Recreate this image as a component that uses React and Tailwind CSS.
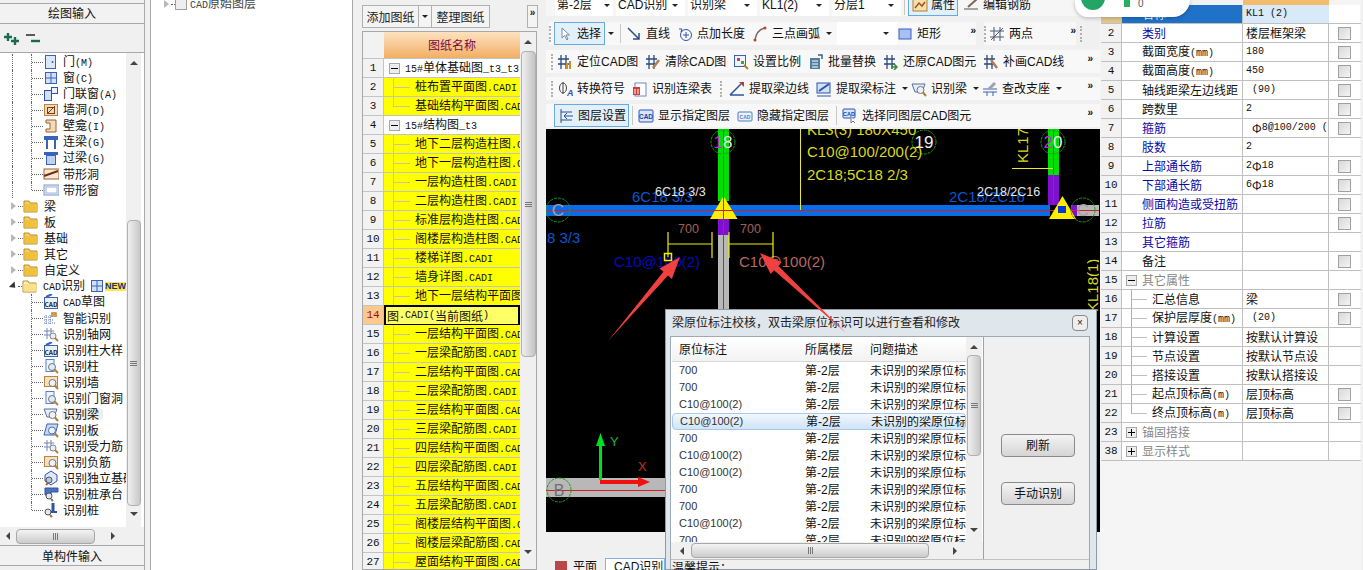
import React from "react";

// latin runs in the old grids are a narrow bitmap font, 6px per char
const T = ({ children }) =>
  String(children)
    .split(/([\x00-\x7f]+)/)
    .map((s, i) =>
      /[\x00-\x7f]/.test(s) ? (
        <span key={i} className="whitespace-pre font-['Liberation_Mono',monospace] text-[10px]">
          {s}
        </span>
      ) : (
        s
      )
    );

const Svg = ({ children, w = 16, h = 16, className = "" }) => (
  <svg width={w} height={h} viewBox="0 0 16 16" className={`shrink-0 ${className}`}>
    {children}
  </svg>
);

const ICONS = {
  door: <><rect x="2.5" y="1.5" width="10" height="13" fill="#dce8f8" stroke="#3a62b8" /><circle cx="9.5" cy="8" r="1" fill="#3a62b8" /></>,
  win: <><rect x="2.5" y="2.5" width="11" height="11" fill="#cfe0f8" stroke="#3a62b8" /><path d="M8 3v10M3 8h10" stroke="#3a62b8" /></>,
  doorwin: <><rect x="1.5" y="4.5" width="7" height="10" fill="#cfe0f8" stroke="#2f52a8" /><rect x="8.5" y="1.5" width="6" height="6" fill="#e8f0fc" stroke="#2f52a8" /></>,
  hole: <><rect x="1.5" y="2.5" width="13" height="11" fill="#f3d9b8" stroke="#c08040" /><path d="M4 12L12 4" stroke="#704020" /><rect x="4.5" y="5.5" width="7" height="6" fill="none" stroke="#704020" /></>,
  niche: <><path d="M3 2h10v12H3v-3h4V5H3z" fill="#f3d9b8" stroke="#a06030" /></>,
  lintel: <><rect x="1" y="2" width="14" height="4" fill="#3a62b8" /><path d="M4 6v9M12 6v9" stroke="#3a62b8" strokeWidth="2" /></>,
  guo: <><rect x="1" y="2" width="14" height="3" fill="#3a62b8" /><rect x="3.5" y="5.5" width="9" height="9" fill="#bcd2f0" stroke="#3a62b8" /></>,
  band: <><rect x="1" y="3" width="15" height="10" fill="#f8e8d8" stroke="#a06030" /><path d="M1 10L15 5" stroke="#703010" strokeWidth="2" /></>,
  bandw: <><rect x="1" y="3" width="15" height="10" fill="#e8eef8" stroke="#8098c8" /><rect x="3" y="5" width="11" height="6" fill="#fff" stroke="#a0b4d8" /></>,
  cad: <><rect x="1.5" y="3.5" width="13" height="11" fill="#e8f0fc" stroke="#3a62b8" /><path d="M3 3l6-3" stroke="#3a62b8" strokeWidth="2" /><text x="8" y="13" textAnchor="middle" fontSize="6.5" fontWeight="700" fill="#222">CAD</text></>,
  smart: <><path d="M1 7h7M1 10h10M1 13h12M3 5v9M7 5v9" stroke="#5878c8" strokeDasharray="1 1" /><path d="M9 7V3h4v4M11 7V4" stroke="#c08020" fill="none" strokeWidth="1.5" /></>,
  axis: <><path d="M1 5h10M1 9h10M4 2v11M8 2v11" stroke="#7088b8" /><circle cx="10" cy="10" r="3" fill="#e8eef8" stroke="#888" /><path d="M12 12l3 3" stroke="#b08030" strokeWidth="2" /></>,
  col: <><rect x="3" y="1.5" width="8" height="12" fill="#eef4fc" stroke="#6080b8" /><circle cx="9" cy="9" r="3.5" fill="#dfeaf8" stroke="#777" /><path d="M11.5 11.5l3.5 3.5" stroke="#b08030" strokeWidth="2" /></>,
  wall: <><rect x="1.5" y="2.5" width="13" height="10" fill="#f6dfc4" stroke="#c08040" /><circle cx="9.5" cy="9" r="3.5" fill="#eef2f8" stroke="#777" /><path d="M12 11.5l3 3.5" stroke="#b08030" strokeWidth="2" /></>,
  beam: <><path d="M1 3h13l-3 8H4z" fill="#e8eef8" stroke="#5070a8" /><circle cx="9.5" cy="9" r="3.5" fill="#eef2f8" stroke="#777" /><path d="M12 11.5l3 3.5" stroke="#b08030" strokeWidth="2" /></>,
  slab: <><path d="M4 2h11l-3 11H1z" fill="#c8d8f0" stroke="#3a62b8" /><circle cx="9" cy="8.5" r="3.5" fill="#eef2f8" stroke="#5070a8" /><path d="M12 11.5l3 3.5" stroke="#b08030" strokeWidth="2" /></>,
  found: <><path d="M8 1l6 4v6l-6 4-6-4V5z" fill="#dfe8f8" stroke="#2f52a8" /><circle cx="6" cy="10" r="3" fill="#b8c8e0" stroke="#555" /><path d="M5 13l-2 2" stroke="#a07030" strokeWidth="2" /></>,
  cap: <><path d="M2 2h13v4H8v3H2z" fill="#4a70c0" stroke="#2f52a8" /><circle cx="6" cy="10" r="3" fill="#dfe8f8" stroke="#555" /><path d="M8 13l2 2" stroke="#a07030" strokeWidth="2" /></>,
  pile: <><path d="M10 1v10" stroke="#2f52a8" strokeWidth="3" /><path d="M6 10h8" stroke="#2f52a8" strokeWidth="2" /><circle cx="5" cy="10" r="3" fill="#dfe8f8" stroke="#555" /><path d="M7 13l2 2" stroke="#a07030" strokeWidth="2" /></>,
  arrow: <path d="M5 2v10l2.5-2.5L10 14l1-1-2-4h3.5z" fill="#fff" stroke="#7a8aa0" />,
  line: <path d="M2 2l11 11M13 7v6H7" fill="none" stroke="#2f4f80" strokeWidth="1.5" />,
  len: <><circle cx="9" cy="9" r="5.5" fill="none" stroke="#2f52a8" /><path d="M9 6v6M6 9h6" stroke="#2f52a8" /><path d="M2 3l3 0-1 3" fill="none" stroke="#2f52a8" /></>,
  arc: <><path d="M3 14C4 7 8 3 13 2" fill="none" stroke="#806060" strokeWidth="1.5" /><circle cx="3" cy="14" r="1.5" fill="#c04040" /><circle cx="13" cy="2" r="1.5" fill="#c04040" /></>,
  rect: <rect x="2" y="3" width="12" height="10" fill="#a8c0f0" stroke="#3a5cc0" />,
  two: <path d="M5 1v14M11 1v14M1 5h14M1 11h14M2 14L14 2" stroke="#4a5a70" fill="none" />,
  locate: <><path d="M4 1v14M9 1v14M1 5h11M1 10h11" stroke="#2a4a80" strokeWidth="1.3" /><rect x="9" y="9" width="2" height="6" fill="#d09020" /><rect x="12" y="7" width="2" height="8" fill="#d09020" /></>,
  clear: <><path d="M4 1v14M9 1v14M1 5h11M1 10h11" stroke="#2a4a80" strokeWidth="1.3" /><path d="M14 6l-6 8" stroke="#b08050" strokeWidth="2.5" /></>,
  scale: <><rect x="1.5" y="1.5" width="11" height="11" fill="#eef4fc" stroke="#3a62b8" /><rect x="4" y="4" width="3" height="3" fill="#d04040" /><rect x="8" y="7" width="3" height="3" fill="#40a040" /><path d="M11 11l4 4" stroke="#b08030" strokeWidth="2" /></>,
  batch: <><rect x="2" y="4" width="10" height="11" fill="#5080a0" /><path d="M4 7h6M4 10h6M4 13h6" stroke="#fff" /><path d="M10 1h4v4" fill="none" stroke="#406080" strokeWidth="1.5" /></>,
  restore: <><path d="M4 1v14M9 1v14M1 5h11M1 10h11" stroke="#2a4a80" strokeWidth="1.3" /><path d="M8 13h6M11 10l3 3-3 3" fill="none" stroke="#309030" strokeWidth="1.5" /></>,
  patch: <><path d="M4 1v14M9 1v14M1 5h11M1 10h11" stroke="#2a4a80" strokeWidth="1.3" /><path d="M8 6l6 8" stroke="#b08050" strokeWidth="2.5" /></>,
  phi: <><ellipse cx="6" cy="7" rx="3.5" ry="5" fill="none" stroke="#444" /><path d="M6 1v12" stroke="#444" /><text x="10" y="15" fontSize="9" fontStyle="italic" fontWeight="700" fill="#2f52a8">A</text></>,
  table: <><rect x="3" y="2" width="11" height="13" fill="#fff" stroke="#7088b8" /><path d="M1 6h7v8H1z" fill="#d04030" /><path d="M3 8v5M6 8v5" stroke="#fff" /></>,
  edge: <><path d="M1 14L12 3M1 14h14" stroke="#2f52a8" strokeWidth="1.5" fill="none" /><path d="M10 1h5v5z" fill="#b04030" /></>,
  mark: <><rect x="1" y="2" width="13" height="10" fill="#cfe0f8" stroke="#2f52a8" /><path d="M3 10L13 3" stroke="#2f52a8" strokeWidth="2" /><path d="M1 15h14" stroke="#2f52a8" /></>,
  support: <><path d="M1 8h14M1 11h14M5 11v4M11 11v4" stroke="#3a62b8" /><path d="M7 8l6-6" stroke="#a0a0b0" strokeWidth="3" /></>,
  layer: <path d="M3 1v14M3 4h11M6 8h9M3 12h11M6 8l3-3M6 8l3 3" stroke="#2f4f80" fill="none" />,
  show: <><rect x="1" y="2" width="14" height="12" rx="1" fill="#d8e6fa" stroke="#2f52c0" /><text x="8" y="11" textAnchor="middle" fontSize="6.5" fontWeight="700" fill="#2040a0">CAD</text></>,
  hide: <><rect x="1" y="4" width="14" height="9" rx="1" fill="#eaf2fc" stroke="#5078c8" /><text x="8" y="10.5" textAnchor="middle" fontSize="5" fontWeight="700" fill="#6080c0">CAD</text></>,
  same: <><rect x="1" y="1" width="12" height="9" rx="1" fill="#d8e6fa" stroke="#2f52c0" /><text x="7" y="8" textAnchor="middle" fontSize="5.5" fontWeight="700" fill="#2040a0">CAD</text><path d="M9 8v7l2-2 2 2" fill="#fff" stroke="#777" /></>,
  attr: <><rect x="1" y="2" width="14" height="12" fill="#f6e0a8" stroke="#b08030" /><path d="M3 11l4-5 3 3 3-4" stroke="#a05020" fill="none" strokeWidth="1.5" /></>,
  rebar: <><path d="M1 12h14" stroke="#555" /><path d="M5 10l9-8" stroke="#7a6a50" strokeWidth="2" /></>,
};

const Ic = ({ k }) => <Svg>{ICONS[k]}</Svg>;

const Caret = ({ className = "" }) => (
  <span className={`block h-0 w-0 shrink-0 border-x-[3px] border-t-[3px] border-x-transparent border-t-[#222] ${className}`} />
);

const More = () => <span className="ml-auto mb-[6px] font-['Liberation_Sans'] text-[10px] font-bold leading-none">»</span>;
const Grip = ({ className = "" }) => <span className={`h-[16px] w-0 shrink-0 border-l-2 border-dotted border-[#b0b0b0] ${className}`} />;
const Sep = ({ className = "" }) => <span className={`h-[19px] w-px shrink-0 bg-[#c8c8c8] ${className}`} />;

const Tool = ({ k, label, className = "", caret }) => (
  <div className={`flex shrink-0 items-center gap-1 whitespace-nowrap ${className}`}>
    <Ic k={k} />
    <span>{label}</span>
    {caret && <Caret className="ml-[2px]" />}
  </div>
);

const Combo = ({ label, first }) => (
  <div
    className={`mr-[3px] flex h-[22px] items-center justify-between whitespace-nowrap bg-white pl-[2px] ${
      first ? "w-[58px] pr-[3px]" : "w-[69px] pr-[7px]"
    }`}
  >
    <span>{label}</span>
    <Caret />
  </div>
);

/* ---------- left tree ---------- */

const treeTop = [
  ["door", "门(M)"], ["win", "窗(C)"], ["doorwin", "门联窗(A)"], ["hole", "墙洞(D)"], ["niche", "壁龛(I)"],
  ["lintel", "连梁(G)"], ["guo", "过梁(G)"], ["band", "带形洞"], ["bandw", "带形窗"],
];
const treeCad = [
  ["cad", "CAD草图"], ["smart", "智能识别"], ["axis", "识别轴网"], ["cad", "识别柱大样"], ["col", "识别柱"],
  ["wall", "识别墙"], ["col", "识别门窗洞"], ["beam", "识别梁"], ["slab", "识别板"], ["axis", "识别受力筋"],
  ["wall", "识别负筋"], ["found", "识别独立基础"], ["cap", "识别桩承台"], ["pile", "识别桩"],
];

const Leaf = ({ k, label, guide, last, active }) => (
  <div className="relative flex h-4 items-center whitespace-nowrap">
    {guide && <span className="absolute left-[12px] top-0 h-4 border-l border-dotted border-[#666]" />}
    <span className={`absolute left-[31px] top-0 border-l border-dotted border-[#666] ${last ? "h-2" : "h-4"}`} />
    <span className="ml-[32px] w-[11px] shrink-0 border-t border-dotted border-[#666]" />
    <Ic k={k} />
    <span className={`ml-[3px] shrink-0 pl-[1px] pr-[4px] ${active ? "rounded-sm bg-[#eeeeee]" : ""}`}>
      <T>{label}</T>
    </span>
  </div>
);

const Folder = ({ open }) => (
  <svg width="16" height="14" viewBox="0 0 16 14" className="shrink-0">
    <path d="M1 2h5l1 2h7v9H1z" fill={open ? "#fff0b8" : "#f4cf5c"} stroke="#b89030" />
    <rect x="1.5" y="5" width="13" height="7.5" fill={open ? "#fbe08c" : "#f0c040"} />
  </svg>
);

const Branch = ({ label, open, children }) => (
  <div className="flex h-4 items-center whitespace-nowrap">
    <span
      className={`ml-[11px] h-0 w-0 border-y-[4px] border-l-[5px] border-y-transparent ${
        open ? "border-l-[#333] rotate-45" : "border-l-[#b8b8b8]"
      }`}
    />
    <span className="ml-[2px] w-[5px] border-t border-dotted border-[#666]" />
    <Folder open={open} />
    <span className="ml-[5px]">
      <T>{label}</T>
    </span>
    {children}
  </div>
);

const ScrollArrow = ({ dir }) => {
  const cls = {
    up: "border-x-[4px] border-b-[4px] border-x-transparent border-b-[#444]",
    down: "border-x-[4px] border-t-[4px] border-x-transparent border-t-[#444]",
    left: "border-y-[4px] border-r-[4px] border-y-transparent border-r-[#444]",
    right: "border-y-[4px] border-l-[4px] border-y-transparent border-l-[#444]",
  }[dir];
  return <span className={`block h-0 w-0 shrink-0 ${cls}`} />;
};

const HGrip = () => (
  <span className="flex flex-col gap-px">
    <span className="h-px w-[7px] bg-[#777]" />
    <span className="h-px w-[7px] bg-[#777]" />
    <span className="h-px w-[7px] bg-[#777]" />
  </span>
);
const VGrip = () => (
  <span className="flex gap-px">
    <span className="h-[7px] w-px bg-[#777]" />
    <span className="h-[7px] w-px bg-[#777]" />
    <span className="h-[7px] w-px bg-[#777]" />
  </span>
);

const LeftPanel = () => (
  <div className="flex h-full w-[145px] shrink-0 flex-col border-r border-[#a8a8a8] bg-[#f0f0f0]">
    <div className="mt-[3px] flex h-[21px] items-center justify-center border-y border-[#a8a8a8] bg-[#f2f2f2] pb-[1px]">绘图输入</div>
    <div className="flex h-[28px] items-center gap-[5px] pl-[3px] pt-[2px]">
      <svg width="17" height="14" viewBox="0 0 17 14">
        <path d="M5 1v8M1 5h8M12 5v8M8 9h8" stroke="#1a6a50" strokeWidth="2.4" />
      </svg>
      <svg width="16" height="14" viewBox="0 0 16 14">
        <path d="M1 3h9" stroke="#333" strokeWidth="1.6" />
        <path d="M6 9h9" stroke="#1a6a50" strokeWidth="2.4" />
      </svg>
    </div>
    <div className="flex h-[475px] border-t border-[#a8a8a8] bg-white">
      <div className="min-w-0 flex-1 overflow-hidden pt-[1px]">
        {treeTop.map(([k, l], i) => (
          <Leaf key={l} k={k} label={l} guide last={i === treeTop.length - 1} />
        ))}
        <Branch label="梁" />
        <Branch label="板" />
        <Branch label="基础" />
        <Branch label="其它" />
        <Branch label="自定义" />
        <Branch label="CAD识别" open>
          <span className="ml-[4px] flex items-center">
            <Ic k="win" />
          </span>
          <span className="bg-[#ffe840] font-['Liberation_Sans'] text-[9px] font-bold leading-[9px] text-[#203080]">NEW</span>
        </Branch>
        {treeCad.map(([k, l], i) => (
          <Leaf key={l} k={k} label={l} last={i === treeCad.length - 1} active={l === "识别梁"} />
        ))}
      </div>
      <div className="flex w-[15px] shrink-0 flex-col items-center bg-[#f0f0f0] pt-[8px]">
        <ScrollArrow dir="up" />
        <div className="mb-[6px] mt-[155px] flex h-[286px] w-[14px] items-center justify-center rounded-sm border border-[#b0b0b0] bg-gradient-to-r from-[#f0f0f0] to-[#c8c8c8]">
          <HGrip />
        </div>
        <ScrollArrow dir="down" />
      </div>
      <div className="w-[3px] shrink-0 bg-white" />
    </div>
    <div className="flex h-[18px] items-center bg-[#f0f0f0] pl-[6px] pr-[27px]">
      <ScrollArrow dir="left" />
      <div className="ml-[6px] flex h-[15px] w-[79px] items-center justify-center rounded-sm border border-[#a8a8a8] bg-gradient-to-b from-[#f4f4f4] to-[#cccccc]">
        <VGrip />
      </div>
      <span className="ml-[16px]">
        <ScrollArrow dir="right" />
      </span>
    </div>
    <div className="flex h-[21px] items-center justify-center border-y border-[#a8a8a8] bg-[#f2f2f2]">单构件输入</div>
  </div>
);

const LayerPane = () => (
  <div className="ml-[5px] h-full w-[203px] shrink-0 border-x border-[#a8a8a8] bg-white">
    <div className="-mt-[4px] flex h-4 items-center pl-[13px]">
      <span className="h-0 w-0 border-y-[4px] border-l-[5px] border-y-transparent border-l-[#b8b8b8]" />
      <span className="ml-[2px] w-[4px] border-t border-dotted border-[#666]" />
      <span className="h-[12px] w-[12px] border border-[#a0a0a0] bg-[#eeeeee]" />
      <span className="ml-[3px] text-[#444]">
        <T>CAD原始图层</T>
      </span>
    </div>
  </div>
);

/* ---------- drawing list ---------- */

const sheets = [
  ["15#单体基础图_t3_t3", "g"], ["桩布置平面图.CADI"], ["基础结构平面图.CADI", "last"], ["15#结构图_t3", "g"],
  ["地下二层构造柱图.CADI"], ["地下一层构造柱图.CADI"], ["一层构造柱图.CADI"], ["二层构造柱图.CADI"],
  ["标准层构造柱图.CADI"], ["阁楼层构造柱图.CADI"], ["楼梯详图.CADI"], ["墙身详图.CADI"],
  ["地下一层结构平面图.CADI"], ["图.CADI(当前图纸)", "cur"], ["一层结构平面图.CADI"], ["一层梁配筋图.CADI"],
  ["二层结构平面图.CADI"], ["二层梁配筋图.CADI"], ["三层结构平面图.CADI"], ["三层梁配筋图.CADI"],
  ["四层结构平面图.CADI"], ["四层梁配筋图.CADI"], ["五层结构平面图.CADI"], ["五层梁配筋图.CADI"],
  ["阁楼层结构平面图.CADI"], ["阁楼层梁配筋图.CADI"], ["屋面结构平面图.CADI"],
];

const MinusBox = ({ plus }) => (
  <span className="relative flex h-[11px] w-[11px] shrink-0 items-center justify-center border border-[#a8a8a8] bg-[#eeeeee]">
    <span className="h-px w-[7px] bg-black" />
    {plus && <span className="absolute h-[7px] w-px bg-black" />}
  </span>
);

const SheetRow = ({ n, name, kind }) => (
  <div className="flex h-[19px] border-b border-[#c4c4c4]">
    <div
      className={`flex w-[21px] shrink-0 items-center justify-center border-r border-[#c4c4c4] font-['Liberation_Mono'] text-[11px] ${
        kind === "cur" ? "bg-[#fbc98e] text-[#9a1010]" : "bg-[#f2f2f2]"
      }`}
    >
      {n}
    </div>
    {kind === "g" ? (
      <div className="flex flex-1 items-center overflow-hidden whitespace-nowrap bg-white pl-[5px]">
        <MinusBox />
        <span className="ml-[5px]">
          <T>{name}</T>
        </span>
      </div>
    ) : kind === "cur" ? (
      <div className="-my-px flex h-[21px] flex-1 items-center overflow-hidden whitespace-nowrap border-2 border-black bg-[#ffff66] pl-[1px]">
        <T>{name}</T>
      </div>
    ) : (
      <div className="flex flex-1 items-center overflow-hidden whitespace-nowrap bg-[#ffff00] pl-[9px]">
        <span className={`w-px shrink-0 bg-[#c8c8a0] ${kind === "last" ? "h-[10px] self-start" : "h-full"}`} />
        <span className="w-[16px] shrink-0 border-t border-[#c8c8a0]" />
        <span className="ml-[5px]">
          <T>{name}</T>
        </span>
      </div>
    )}
  </div>
);

const SheetPane = () => (
  <div className="ml-[5px] flex h-full w-[187px] shrink-0 flex-col">
    <div className="mt-[5px] flex h-[23px] items-stretch pl-[4px] pr-[7px] text-[#222]">
      <div className="flex w-[57px] items-center justify-center border border-[#b0b0b0] bg-[#f4f4f4]">添加图纸</div>
      <div className="flex w-[13px] items-center justify-center border-y border-r border-[#b0b0b0] bg-[#f4f4f4]">
        <Caret />
      </div>
      <div className="flex w-[58px] items-center justify-center border-y border-r border-[#b0b0b0] bg-[#f4f4f4]">整理图纸</div>
      <div className="ml-auto flex w-[11px] justify-center border border-[#b0b0b0] bg-[#f4f4f4] pt-[2px]">
        <span className="font-['Liberation_Sans'] text-[10px] font-bold leading-none">»</span>
      </div>
    </div>
    <div className="ml-[4px] mt-[3px] flex min-h-0 w-[175px] flex-1 overflow-hidden border border-[#a8a8a8] bg-white">
      <div className="w-[157px] shrink-0">
        <div className="flex h-[27px] border-b border-[#c4c4c4]">
          <div className="w-[21px] shrink-0 bg-[#f2f2f2]" />
          <div className="flex flex-1 items-center justify-center bg-gradient-to-b from-[#fbe2c0] to-[#f3ae62] text-[#7a0a40]">图纸名称</div>
        </div>
        {sheets.map(([name, kind], i) => (
          <SheetRow key={i} n={i + 1} name={name} kind={kind} />
        ))}
      </div>
      <div className="flex w-[16px] shrink-0 flex-col items-center bg-[#f0f0f0] pt-[8px]">
        <ScrollArrow dir="up" />
        <div className="mt-[7px] flex h-[306px] w-[15px] items-center justify-center rounded-sm border border-[#b0b0b0] bg-gradient-to-r from-[#f0f0f0] to-[#c4c4c4]">
          <HGrip />
        </div>
        <div className="mt-[193px]">
          <ScrollArrow dir="down" />
        </div>
      </div>
    </div>
  </div>
);

/* ---------- CAD canvas ---------- */

const Axis = ({ x, y, children }) => (
  <>
    <circle cx={x} cy={y} r="12" fill="none" stroke="#1a9a1a" strokeDasharray="3 1" />
    {children}
  </>
);

const CadCanvas = () => (
  <div className="h-[403px] w-full shrink-0 bg-black">
    <svg width="553" height="403" viewBox="546 129 553 403" className="block font-['Liberation_Sans']">
      {/* beams */}
      <rect x="546" y="205" width="504" height="11" fill="#0a6be6" />
      <rect x="718" y="129" width="11" height="72" fill="#00e000" />
      <rect x="718" y="219" width="11" height="16" fill="#8010d0" />
      <rect x="718" y="235" width="11" height="80" fill="#b8b8b8" />
      <path d="M723.5 129V315" stroke="#d02020" />
      <rect x="1048" y="129" width="11" height="46" fill="#00e000" />
      <rect x="1048" y="175" width="11" height="30" fill="#8010d0" />
      <path d="M1053.5 129V205" stroke="#d02020" />
      <rect x="1074" y="205" width="25" height="11" fill="#b8b8b8" />
      <rect x="1071" y="205" width="6" height="11" fill="#8010d0" />
      <rect x="546" y="478" width="120" height="19" fill="#b8b8b8" />
      <path d="M546 210.5H1099M546 490.5H666" stroke="#d02020" />
      <path d="M800.5 129V210M1012 168.5H1053" stroke="#e8e830" />
      {/* supports */}
      <path d="M723.5 196L737.5 219H710z" fill="#ffee00" />
      <path d="M723.5 196V219M710 210.5H737" stroke="#d02020" />
      <path d="M1062.5 196L1076 219H1049z" fill="#ffee00" />
      <rect x="1058" y="206" width="8" height="7" fill="#0838d8" />
      {/* axis bubbles */}
      <Axis x={723} y={142}>
        <text x="723" y="148" textAnchor="middle" fontSize="17" fill="#e8e8e8"><tspan fill="#b040c0">1</tspan>8</text>
      </Axis>
      <Axis x={924} y={142}>
        <text x="924" y="148" textAnchor="middle" fontSize="17" fill="#f0f0f0">19</text>
      </Axis>
      <Axis x={1053} y={142}>
        <text x="1053" y="148" textAnchor="middle" fontSize="17" fill="#f0f0f0"><tspan fill="#b040c0">2</tspan>0</text>
      </Axis>
      <Axis x={558} y={210}>
        <text x="558" y="216" textAnchor="middle" fontSize="17" fill="#a0a0a0">C</text>
      </Axis>
      <Axis x={1083} y={210}>
        <text x="1083" y="216" textAnchor="middle" fontSize="17" fill="#a0a0a0">C</text>
      </Axis>
      <Axis x={559} y={490}>
        <text x="559" y="496" textAnchor="middle" fontSize="16" fill="#707070">B</text>
      </Axis>
      {/* annotation text */}
      <g fontSize="15" fill="#d8d820">
        <text x="807" y="135">KL3(3) 180X450</text>
        <text x="807" y="157">C10@100/200(2)</text>
        <text x="807" y="180">2C18;5C18 2/3</text>
      </g>
      <text transform="translate(1028 163) rotate(-90)" fontSize="15" fill="#d8d820">KL17</text>
      <text transform="translate(1098 312) rotate(-90)" fontSize="15" fill="#d8d820">KL18(1)</text>
      <text x="632" y="202" fontSize="15" fill="#0a55d0">6C18 3/3</text>
      <text x="655" y="196" fontSize="12.5" fill="#e8e8e8">6C18 3/3</text>
      <text x="949" y="202" fontSize="15" fill="#0a55d0">2C18/2C16</text>
      <text x="977" y="196" fontSize="12.5" fill="#e8e8e8">2C18/2C16</text>
      <text x="547" y="243" fontSize="15" fill="#0a55d0">8 3/3</text>
      <text x="678" y="233" fontSize="12.5" fill="#a06058">700</text>
      <text x="740" y="233" fontSize="12.5" fill="#a06058">700</text>
      <text x="614" y="267" fontSize="15" fill="#0808c0">C10@100(2)</text>
      <text x="739" y="267" fontSize="15" fill="#b86860">C10@100(2)</text>
      {/* dimension lines */}
      <path d="M668 244H712M668 232V257M712 232V258M729 244H773M729 232V258M773 232V258" stroke="#f0f000" strokeWidth="1.2" />
      <rect x="664.5" y="253.5" width="7" height="7" fill="none" stroke="#f0f000" strokeWidth="1.5" />
      {/* ucs */}
      <path d="M600.5 480V440" stroke="#00e020" strokeWidth="3" />
      <path d="M600.5 433L605 446H596z" fill="#00e020" />
      <text x="610" y="446" fontSize="13" fill="#20b040">Y</text>
      <path d="M600 482H640" stroke="#f01010" strokeWidth="4" />
      <path d="M650 482L638 477V487z" fill="#f01010" />
      <text x="638" y="471" fontSize="13" fill="#c03030">X</text>
    </svg>
  </div>
);

/* ---------- dialog ---------- */

const checks = ["700", "700", "C10@100(2)", "C10@100(2)", "700", "C10@100(2)", "C10@100(2)", "700", "700", "C10@100(2)", "700"];

const DialogRow = ({ label, selected }) => (
  <div
    className={`flex h-[17px] items-center whitespace-nowrap ${
      selected ? "rounded-sm border border-[#a8c8ea] bg-gradient-to-b from-[#f2f8fe] to-[#cfe3f8]" : ""
    }`}
  >
    <span className="w-[133px] shrink-0 pl-[7px] font-['Liberation_Sans'] text-[11px] text-[#333]">{label}</span>
    <span className="w-[65px] shrink-0 font-['Liberation_Sans','Noto_Sans_CJK_SC',sans-serif]">第-2层</span>
    <span className="overflow-hidden">未识别的梁原位标注</span>
  </div>
);

const DialogBtn = ({ children, className = "" }) => (
  <div className={`flex h-[23px] w-[74px] items-center justify-center rounded-sm border border-[#8a8a8a] bg-gradient-to-b from-[#f4f4f4] to-[#d4d4d4] ${className}`}>{children}</div>
);

const Dialog = () => (
  <div className="absolute left-[119px] top-[309px] flex h-[261px] w-[432px] flex-col border border-[#909aa4] bg-[#dfe6ec]">
    <div className="flex h-[26px] shrink-0 items-center justify-between pl-[6px] pr-[8px] text-[#222]">
      <span>梁原位标注校核，双击梁原位标识可以进行查看和修改</span>
      <span className="flex h-[16px] w-[16px] items-center justify-center rounded-sm border border-[#8a8a8a] bg-[#eeeeee] font-['Liberation_Sans'] text-[10px] leading-none">×</span>
    </div>
    <div className="ml-[4px] mr-[6px] flex min-h-0 flex-1 flex-col border-x border-t border-[#a0a8b0] bg-[#f0f0f0]">
      <div className="flex h-[222px] shrink-0">
        <div className="flex h-full w-[313px] shrink-0 flex-col border-r border-[#a0a0a0] bg-white">
          <div className="flex min-h-0 flex-1">
            <div className="flex w-[295px] shrink-0 flex-col overflow-hidden pl-[1px]">
              <div className="mt-[2px] flex h-[23px] shrink-0 items-center border-b border-[#d8d8d8] bg-gradient-to-b from-white to-[#f2f2f2]">
                <span className="w-[133px] pl-[7px]">原位标注</span>
                <span className="w-[65px]">所属楼层</span>
                <span>问题描述</span>
              </div>
              <div className="min-h-0 flex-1 overflow-hidden">
                {checks.map((c, i) => (
                  <DialogRow key={i} label={c} selected={i === 3} />
                ))}
              </div>
            </div>
            <div className="flex w-[16px] shrink-0 flex-col items-center bg-[#f0f0f0] pt-[8px]">
              <ScrollArrow dir="up" />
              <div className="mt-[6px] flex h-[101px] w-[14px] items-center justify-center rounded-sm border border-[#b0b0b0] bg-gradient-to-r from-[#f0f0f0] to-[#c8c8c8]">
                <HGrip />
              </div>
              <div className="mt-[72px]">
                <ScrollArrow dir="down" />
              </div>
            </div>
          </div>
          <div className="flex h-[17px] shrink-0 items-center bg-[#f0f0f0] pl-[9px]">
            <ScrollArrow dir="left" />
            <div className="ml-[7px] flex h-[15px] w-[238px] items-center justify-center rounded-sm border border-[#a8a8a8] bg-gradient-to-b from-[#f4f4f4] to-[#cccccc]">
              <VGrip />
            </div>
            <span className="ml-[24px]">
              <ScrollArrow dir="right" />
            </span>
          </div>
        </div>
        <div className="flex flex-1 flex-col pl-[17px] pt-[97px]">
          <DialogBtn>刷新</DialogBtn>
          <DialogBtn className="mt-[25px]">手动识别</DialogBtn>
        </div>
      </div>
      <div className="border-t border-[#c0c0c0] pl-[1px] pt-[1px] leading-[14px]">温馨提示：</div>
    </div>
  </div>
);

/* ---------- middle column ---------- */

const MiddleColumn = () => (
  <div className="relative ml-[1px] flex h-full w-[554px] shrink-0 flex-col overflow-hidden bg-[#f0f0f0] font-['Liberation_Sans','Noto_Sans_CJK_SC',sans-serif]">
    <div className="-mt-[6px] flex h-[22px] items-center bg-[#f6f6f6] pl-[9px]">
      <Combo label="第-2层" first />
      <Combo label="CAD识别" />
      <Combo label="识别梁" />
      <Combo label="KL1(2)" />
      <Combo label="分层1" />
      <Sep />
      <div className="ml-[3px] flex h-[22px] w-[50px] items-center gap-[3px] whitespace-nowrap border border-[#6aa8e0] bg-[#e2f0fc] pl-[3px]">
        <Ic k="attr" />
        <span>属性</span>
      </div>
      <Tool k="rebar" label="编辑钢筋" className="ml-[5px]" />
    </div>

    <div className="mt-[6px] flex h-[23px] items-center">
      <div className="ml-[3px] flex h-full w-[427px] items-center bg-[#f8f8f8]">
        <Grip className="mr-[3px]" />
        <div className="flex h-[23px] w-[51px] items-center gap-[4px] border border-[#6aa8e0] bg-[#e2f0fc] pl-[2px]">
          <Ic k="arrow" />
          <span>选择</span>
        </div>
        <Caret className="ml-[3px]" />
        <Sep className="ml-[6px]" />
        <Tool k="line" label="直线" className="ml-[5px] w-[51px]" />
        <Tool k="len" label="点加长度" className="w-[75px]" />
        <Tool k="arc" label="三点画弧" caret className="w-[85px]" />
        <div className="flex h-full w-[60px] items-center justify-between bg-white pr-[8px]">
          <span />
          <Caret />
        </div>
        <Tool k="rect" label="矩形" className="w-[72px]" />
        <More />
      </div>
      <div className="ml-[8px] flex h-full w-[92px] items-center bg-[#f8f8f8]">
        <Grip className="mr-[3px]" />
        <Tool k="two" label="两点" />
        <More />
      </div>
      <Grip className="ml-[4px]" />
    </div>

    <div className="mt-[5px] flex h-[23px] items-center bg-[#f8f8f8] pl-[5px] pr-[7px]">
      <Grip className="mr-[4px]" />
      <Tool k="locate" label="定位CAD图" className="w-[88px]" />
      <Tool k="clear" label="清除CAD图" className="w-[88px]" />
      <Tool k="scale" label="设置比例" className="w-[75px]" />
      <Tool k="batch" label="批量替换" className="w-[75px]" />
      <Tool k="restore" label="还原CAD图元" className="w-[100px]" />
      <Tool k="patch" label="补画CAD线" />
      <More />
    </div>

    <div className="mt-[4px] flex h-[23px] items-center bg-[#f8f8f8] pl-[5px] pr-[7px]">
      <Grip className="mr-[4px]" />
      <Tool k="phi" label="转换符号" className="w-[75px]" />
      <Tool k="table" label="识别连梁表" className="w-[88px]" />
      <Grip className="mr-[7px]" />
      <Tool k="edge" label="提取梁边线" className="w-[87px]" />
      <Tool k="mark" label="提取梁标注" caret className="w-[95px]" />
      <Tool k="beam" label="识别梁" caret className="w-[71px]" />
      <Tool k="support" label="查改支座" caret />
      <More />
    </div>

    <div className="mt-[4px] flex h-[23px] items-center bg-[#f8f8f8] pl-[8px] pr-[7px]">
      <div className="flex h-[23px] w-[75px] items-center gap-[4px] whitespace-nowrap border border-[#6aa8e0] bg-[#e2f0fc] pl-[3px]">
        <Ic k="layer" />
        <span>图层设置</span>
      </div>
      <Sep className="ml-[3px]" />
      <Tool k="show" label="显示指定图层" className="ml-[5px] w-[99px]" />
      <Tool k="hide" label="隐藏指定图层" className="w-[99px]" />
      <Sep className="mr-[5px]" />
      <Tool k="same" label="选择同图层CAD图元" />
      <More />
    </div>

    <div className="mt-[2px]">
      <CadCanvas />
    </div>

    <div className="flex flex-1 items-end overflow-hidden pl-[9px]">
      <div className="-mb-[5px] flex h-[17px] items-center">
        <span className="h-[12px] w-[12px] bg-[#b84848]" />
        <span className="ml-[6px] w-[32px]">平面</span>
        <span className="flex h-[17px] w-[60px] items-center border border-[#8ab0e0] bg-white pl-[8px]">CAD识别</span>
      </div>
    </div>

    <Dialog />

    {/* the two red arrows were scribbled over the window, dialog included */}
    <svg width="554" height="441" viewBox="546 129 554 441" className="pointer-events-none absolute left-0 top-[129px]">
      <path d="M608 341L663.4 271.7L659.6 268.5L680 257L671.8 278.9L668 275.6Z" fill="#f04040" />
      <path d="M846 333L778.1 265.8L781.5 262.1L760 253L770.7 273.9L774 270.2Z" fill="#f04040" />
    </svg>
  </div>
);

/* ---------- properties ---------- */

const props = [
  [2, "类别", "楼层框架梁", 1, "b"], [3, "截面宽度(mm)", "180", 1], [4, "截面高度(mm)", "450", 1],
  [5, "轴线距梁左边线距", " (90)", 1], [6, "跨数里", "2", 1], [7, "箍筋", " Φ8@100/200 (2", 1, "b"], [8, "肢数", "2", 0, "b"],
  [9, "上部通长筋", "2Φ18", 1, "b"], [10, "下部通长筋", "6Φ18", 1, "b"], [11, "侧面构造或受扭筋", "", 1, "b"],
  [12, "拉筋", "", 1, "b"], [13, "其它箍筋", "", 0, "b"], [14, "备注", "", 1],
  [15, "其它属性", "", 0, "g"], [16, "汇总信息", "梁", 1, "c"], [17, "保护层厚度(mm)", " (20)", 1, "c"],
  [18, "计算设置", "按默认计算设", 0, "c"], [19, "节点设置", "按默认节点设", 0, "c"], [20, "搭接设置", "按默认搭接设", 0, "c"],
  [21, "起点顶标高(m)", "层顶标高", 1, "c"], [22, "终点顶标高(m)", "层顶标高", 1, "e"],
  [23, "锚固搭接", "", 0, "p"], [38, "显示样式", "", 0, "p"],
];

const PropRow = ({ n, name, value, check, kind }) => {
  const child = kind === "c" || kind === "e";
  const box = kind === "g" || kind === "p";
  return (
    <div className="flex h-[19px] border-b border-[#c0c0c0]">
      <div className="flex w-[21px] shrink-0 items-center justify-center border-r border-[#c0c0c0] bg-[#f2f2f2] font-['Liberation_Mono'] text-[11px]">{n}</div>
      <div
        className={`flex w-[121px] shrink-0 items-center overflow-hidden whitespace-nowrap border-r border-[#c0c0c0] bg-white ${
          box ? "pl-[4px] text-[#888]" : child ? "pl-[9px]" : "pl-[20px]"
        } ${kind === "b" ? "text-[#0a0aa8]" : ""}`}
      >
        {kind === "g" && <MinusBox />}
        {kind === "p" && <MinusBox plus />}
        {child && <span className={`w-px shrink-0 bg-[#b0b0b0] ${kind === "e" ? "h-[10px] self-start" : "h-full"}`} />}
        {child && <span className="mr-[5px] w-[15px] shrink-0 border-t border-[#c0c0c0]" />}
        <span className={box ? "ml-[5px]" : ""}>
          <T>{name}</T>
        </span>
      </div>
      <div className="flex w-[86px] shrink-0 items-center overflow-hidden whitespace-nowrap border-r border-[#c0c0c0] bg-white pl-[3px]">
        <T>{value}</T>
      </div>
      <div className="flex w-[31px] shrink-0 items-center justify-center bg-white">
        {check ? <span className="h-[13px] w-[13px] border border-[#a0a0a0] bg-gradient-to-br from-[#d8d8d8] to-[#f4f4f4]" /> : null}
      </div>
    </div>
  );
};

const PropPane = () => (
  <div className="flex h-full w-[261px] shrink-0 flex-col bg-[#f5f5f5] pl-[1px]">
    <div className="flex h-[5px] shrink-0">
      <div className="w-[142px] bg-[#f2f2f2]" />
      <div className="w-[86px] bg-[#f3bc6c]" />
    </div>
    <div className="flex h-[19px] shrink-0 border-b border-[#c0c0c0]">
      <div className="flex w-[21px] shrink-0 items-center justify-center border-r border-[#c0c0c0] bg-[#e4c88e] font-['Liberation_Mono'] text-[11px]">1</div>
      <div className="flex w-[121px] shrink-0 items-center border-r border-[#c0c0c0] bg-[#1f72c8] pl-[20px] text-white">名称</div>
      <div className="flex w-[86px] shrink-0 items-center bg-[#d8eafa] pl-[3px]">
        <T>KL1 (2)</T>
      </div>
      <div className="w-[31px] shrink-0 bg-white" />
    </div>
    {props.map(([n, name, value, check, kind]) => (
      <PropRow key={n} n={n} name={name} value={value} check={check} kind={kind} />
    ))}
  </div>
);

export default function App() {
  return (
    <div className="relative flex h-[570px] w-[1363px] overflow-hidden bg-[#f0f0f0] font-['Noto_Sans_CJK_SC','Liberation_Sans',sans-serif] text-[12px] leading-none text-[#111]">
      <LeftPanel />
      <LayerPane />
      <SheetPane />
      <MiddleColumn />
      <PropPane />

      {/* floating capture widget over the top edge */}
      <div className="absolute left-[1075px] top-0 flex h-[17px] w-[115px] items-start rounded-bl-[14px] rounded-br-[18px] bg-white shadow-[0_1px_4px_rgba(0,0,0,0.25)]">
        <span className="ml-[6px] -mt-[14px] h-[24px] w-[24px] rounded-full bg-[#25a565]" />
        <span className="ml-[19px] h-[7px] w-[6px] bg-[#25b060]" />
        <span className="ml-[8px] font-['Liberation_Sans'] text-[10px] leading-[8px] text-[#555]">0</span>
      </div>
    </div>
  );
}
